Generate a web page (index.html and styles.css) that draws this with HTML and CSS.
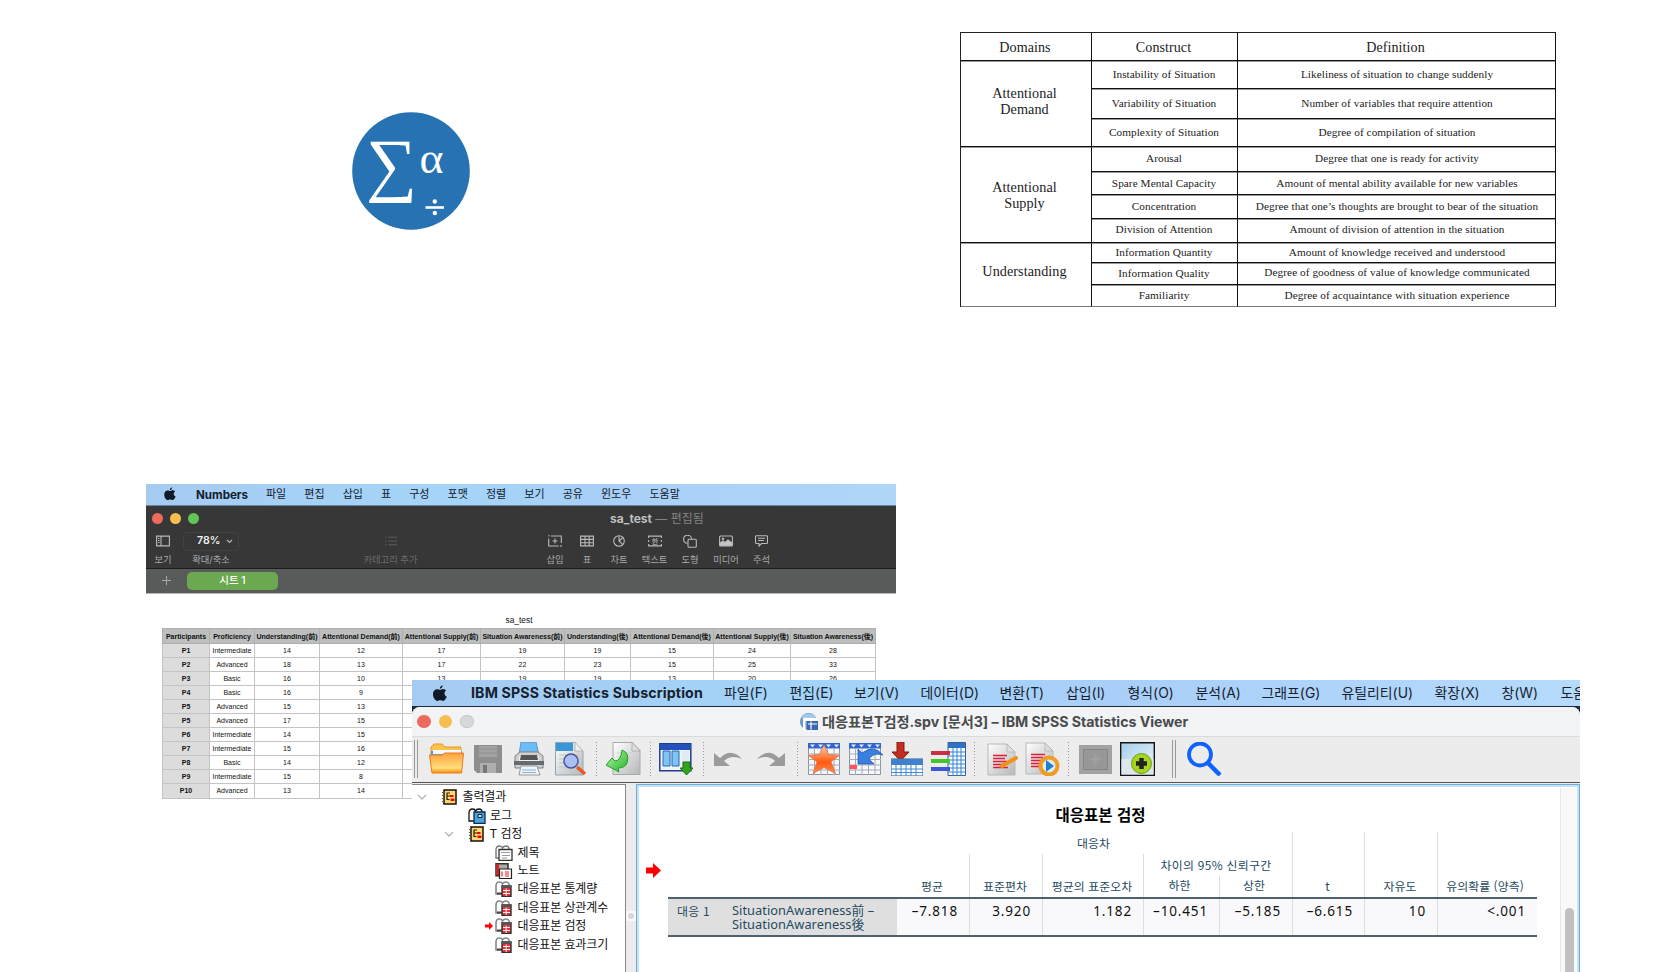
FILE: index.html
```html
<!DOCTYPE html>
<html lang="ko">
<head>
<meta charset="utf-8">
<title>Situation awareness analysis</title>
<link rel="stylesheet" href="styles.css">
</head>
<body>
<svg class="defs" width="0" height="0">
  <defs>
    <linearGradient id="gFold" x1="0" y1="0" x2="0" y2="1"><stop offset="0" stop-color="#ffa040"/><stop offset=".75" stop-color="#ffdf7a"/><stop offset="1" stop-color="#ff8a10"/></linearGradient>
    <linearGradient id="gPage" x1="0" y1="0" x2="1" y2="1"><stop offset="0" stop-color="#fff"/><stop offset="1" stop-color="#b5b7b8"/></linearGradient>
    <linearGradient id="gStar" x1="0" y1="0" x2="0" y2="1"><stop offset="0" stop-color="#ffd2b0"/><stop offset=".6" stop-color="#ff5a10"/><stop offset="1" stop-color="#ff8a50"/></linearGradient>
    <linearGradient id="gGreen" x1="0" y1="0" x2="1" y2="1"><stop offset="0" stop-color="#b6f5a5"/><stop offset="1" stop-color="#22b529"/></linearGradient>
    <linearGradient id="gSky" x1="0" y1="0" x2="1" y2="1"><stop offset="0" stop-color="#a4cdec"/><stop offset="1" stop-color="#f0f7fc"/></linearGradient>
  </defs>
  <symbol id="apple" viewBox="0 0 14 17"><path d="M9.6.2C9.7 2 8.400 3.700 6.800 3.800 6.700 2.200 8.100.5 9.600.2ZM7 4.900c.7 0 1.700-1 3.200-.9 1.300.1 2.300.6 3 1.500-2.500 1.600-2.100 5 .6 6.100-.7 1.900-2 4.300-3.700 4.300-1.100 0-1.600-.7-2.900-.7s-1.800.7-2.900.7C2.400 16-.2 12.400 0 8.700.2 5.900 2 4.200 4 4.200c1.300 0 2.300.7 3 .7Z" fill="#111a24"/></symbol>
  <symbol id="book" viewBox="0 0 16 16"><path d="M2 1h12v14H2z" fill="#fcd873" stroke="#171008" stroke-width="1.500"/><path d="M0 3.500h3M0 6.500h3M0 9.500h3M0 12.500h3" stroke="#554" stroke-width="1"/><path d="M4.500 4h3.500M4.500 7h3M4.500 10.500h3M5 4v7" stroke="#221" stroke-width="1.200"/><path d="M7.500 6h4v2h-4zM8.500 9.500h4v2.500h-4z" fill="#e80909"/></symbol>
  <symbol id="dtable" viewBox="0 0 18 16"><path d="M1 13V5Q1 1 4.500 1 7 1 7.500 3 8.500 1 11 1q3 0 3.500 4v8z" fill="#fff" stroke="#888" stroke-width="1.600"/><path d="M2 12.500h5" stroke="#444" stroke-width="2"/><path d="M7 5h9v10.500H7z" fill="#e8343c" stroke="#333" stroke-width="1.400"/><path d="M6.500 4.500h10v2.500h-10z" fill="#555"/><path d="M8 9.500h7M8 12.500h7M11.200 7.500v7.500" stroke="#fff" stroke-width=".9"/></symbol>
  <symbol id="chev" viewBox="0 0 10 6"><path d="M1 1l4 4 4-4" fill="none" stroke="#b5b5b5" stroke-width="1.300"/></symbol>
  <symbol id="grid" viewBox="0 0 32 32"><path d="M.5.500h31v31H.5z" fill="#f7f8fa" stroke="#8b93a4"/><path d="M0 0h32v5.500H0z" fill="#3464ce"/><path d="M2 1.500h5l-2.500 3zM10 1.500h5l-2.500 3zM18 1.500h5l-2.500 3zM26 1.500h5l-2.500 3z" fill="#dcebff"/><path d="M0 11h32M0 16.500h32M0 22h32M0 27h32M6.500 6v26M13 6v26M19.500 6v26M26 6v26" stroke="#a4aab8"/></symbol>
  <symbol id="script" viewBox="0 0 30 33"><path d="M1 1h19l8 8v23H1z" fill="url(#gPage)" stroke="#b8b8b8"/><path d="M20 1v8h8z" fill="#ddd" stroke="#aaa" stroke-width=".6"/><path d="M6 12.500h14M6 15.500h12M6 18.500h14M6 21.500h10M6 24.500h15" stroke="#df1f3a" stroke-width="1.500"/></symbol>
</svg>

<main class="canvas">

  <svg class="logo" viewBox="0 0 118 118" width="118" height="118">
    <circle cx="59" cy="59" r="58.800" fill="#2672b2"/>
    <text class="logo-text" x="14" y="76" font-size="70.500" textLength="51" lengthAdjust="spacingAndGlyphs">∑</text>
    <text class="logo-text" x="67.500" y="60.500" font-size="45" textLength="24" lengthAdjust="spacingAndGlyphs">α</text>
    <g fill="#fff"><path d="M73.500 94.200h18.500v2.600H73.500z"/><circle cx="82.800" cy="89.500" r="2.200"/><circle cx="82.800" cy="101" r="2.200"/></g>
  </svg>

  <section class="domains">
    <div class="hd">Domains</div><div class="hd">Construct</div><div class="hd">Definition</div>
    <div class="dom r3">Attentional<br>Demand</div>
    <div>Instability of Situation</div><div class="def">Likeliness of situation to change suddenly</div>
    <div>Variability of Situation</div><div class="def">Number of variables that require attention</div>
    <div>Complexity of Situation</div><div class="def">Degree of compilation of situation</div>
    <div class="dom r4">Attentional<br>Supply</div>
    <div class="up">Arousal</div><div class="def up">Degree that one is ready for activity</div>
    <div>Spare Mental Capacity</div><div class="def">Amount of mental ability available for new variables</div>
    <div>Concentration</div><div class="def">Degree that one’s thoughts are brought to bear of the situation</div>
    <div class="up">Division of Attention</div><div class="def up">Amount of division of attention in the situation</div>
    <div class="dom r3 last und">Understanding</div>
    <div>Information Quantity</div><div class="def">Amount of knowledge received and understood</div>
    <div>Information Quality</div><div class="def up">Degree of goodness of value of knowledge communicated</div>
    <div class="last">Familiarity</div><div class="def last">Degree of acquaintance with situation experience</div>
  </section>

  <section class="numbers">
    <nav class="n-menu">
      <svg width="12" height="14"><use href="#apple"/></svg>
      <b>Numbers</b><span>파일</span><span>편집</span><span>삽입</span><span>표</span><span>구성</span><span>포맷</span><span>정렬</span><span>보기</span><span>공유</span><span>윈도우</span><span>도움말</span>
    </nav>
    <div class="n-title">
      <div class="lights small"><i class="red"></i><i class="yellow"></i><i class="green"></i></div>
      <div class="n-name"><b>sa_test</b> <span>— 편집됨</span></div>
    </div>
    <div class="n-tools">
      <div class="tool"><svg width="14" height="12" viewBox="0 0 14 12"><path d="M.6 1.100h12.800v9.800H.6zM5 1v10M2 3.500h1.500M2 5.500h1.500M2 7.500h1.500"/></svg><span>보기</span></div>
      <div class="tool"><div class="zoom">78%<svg width="7" height="5" viewBox="0 0 7 5"><path d="M1 1l2.500 2.500L6 1"/></svg></div><span>확대/축소</span></div>
      <div class="tool dim"><svg width="12" height="10" viewBox="0 0 12 10"><path d="M0 1.200h1.500M3.500 1.200H12M0 5h1.500M3.500 5H12M0 8.800h1.500M3.500 8.800H12"/></svg><span>카테고리 추가</span></div>
      <div class="tool"><svg width="14" height="12" viewBox="0 0 14 12"><path d="M1 0v1.500M3 1h10.300v7M.7 3.500V11h10M13 10v2M7 3.500v5M4.500 6h5"/></svg><span>삽입</span></div>
      <div class="tool"><svg width="14" height="12" viewBox="0 0 14 12"><path d="M.6 1.100h12.800v9.800H.6zM.6 4.400h12.800M.6 7.700h12.800M5 1v10M9.200 1v10"/></svg><span>표</span></div>
      <div class="tool"><svg width="12" height="12" viewBox="0 0 12 12"><circle cx="6" cy="6" r="5.300"/><path d="M6 .7V6l3.800 3.600M6 6l4-3.500"/></svg><span>차트</span></div>
      <div class="tool"><svg width="14" height="12" viewBox="0 0 14 12"><path d="M.6 3V1.100h12.800V3M.6 9v1.900h12.800V9M.6 5v2M13.400 5v2"/><text x="7" y="8.600" font-size="7" text-anchor="middle">한</text></svg><span>텍스트</span></div>
      <div class="tool"><svg width="14" height="13" viewBox="0 0 14 13"><path d="M4.500 8.300A4 4 0 1 1 8.600 4"/><rect x="5" y="4.300" width="8.300" height="8" rx="1"/></svg><span>도형</span></div>
      <div class="tool"><svg width="14" height="12" viewBox="0 0 14 12"><rect x=".6" y="1" width="12.800" height="10" rx="1"/><path d="M1 8l3-2 2 1.500L9 5l4 3v2.500H1z" fill="#c4c5c4"/><circle cx="4" cy="3.700" r=".7"/></svg><span>미디어</span></div>
      <div class="tool"><svg width="13" height="12" viewBox="0 0 13 12"><path d="M1.500.7h10q1 0 1 1v5.800q0 1-1 1H6.500L4 11V8.500H1.500q-1 0-1-1v-6q0-.8 1-.8ZM3 3.200h7M3 5.500h6"/></svg><span>주석</span></div>
    </div>
    <div class="n-tabs"><svg width="9" height="9" viewBox="0 0 9 9"><path d="M4.500 0v9M0 4.500h9" stroke="#a9abaa"/></svg><span>시트 1</span></div>
  </section>

  <section class="sheet">
    <h2>sa_test</h2>
    <table>
      <colgroup><col class="w1"><col class="w2"><col class="w3"><col class="w4"><col class="w5"><col class="w6"><col class="w7"><col class="w8"><col class="w9"><col class="w10"></colgroup>
      <tr><th>Participants</th><th>Proficiency</th><th>Understanding(前)</th><th>Attentional Demand(前)</th><th>Attentional Supply(前)</th><th>Situation Awareness(前)</th><th>Understanding(後)</th><th>Attentional Demand(後)</th><th>Attentional Supply(後)</th><th>Situation Awareness(後)</th></tr>
      <tr><td>P1</td><td>Intermediate</td><td>14</td><td>12</td><td>17</td><td>19</td><td>19</td><td>15</td><td>24</td><td>28</td></tr>
      <tr><td>P2</td><td>Advanced</td><td>18</td><td>13</td><td>17</td><td>22</td><td>23</td><td>15</td><td>25</td><td>33</td></tr>
      <tr><td>P3</td><td>Basic</td><td>16</td><td>10</td><td>13</td><td>19</td><td>19</td><td>13</td><td>20</td><td>26</td></tr>
      <tr><td>P4</td><td>Basic</td><td>16</td><td>9</td><td></td><td></td><td></td><td></td><td></td><td></td></tr>
      <tr><td>P5</td><td>Advanced</td><td>15</td><td>13</td><td></td><td></td><td></td><td></td><td></td><td></td></tr>
      <tr><td>P5</td><td>Advanced</td><td>17</td><td>15</td><td></td><td></td><td></td><td></td><td></td><td></td></tr>
      <tr><td>P6</td><td>Intermediate</td><td>14</td><td>15</td><td></td><td></td><td></td><td></td><td></td><td></td></tr>
      <tr><td>P7</td><td>Intermediate</td><td>15</td><td>16</td><td></td><td></td><td></td><td></td><td></td><td></td></tr>
      <tr><td>P8</td><td>Basic</td><td>14</td><td>12</td><td></td><td></td><td></td><td></td><td></td><td></td></tr>
      <tr><td>P9</td><td>Intermediate</td><td>15</td><td>8</td><td></td><td></td><td></td><td></td><td></td><td></td></tr>
      <tr><td>P10</td><td>Advanced</td><td>13</td><td>14</td><td></td><td></td><td></td><td></td><td></td><td></td></tr>
    </table>
  </section>

  <section class="spss">
    <nav class="s-menu">
      <svg width="14" height="17"><use href="#apple"/></svg>
      <b>IBM SPSS Statistics Subscription</b><span>파일(F)</span><span>편집(E)</span><span>보기(V)</span><span>데이터(D)</span><span>변환(T)</span><span>삽입(I)</span><span>형식(O)</span><span>분석(A)</span><span>그래프(G)</span><span>유틸리티(U)</span><span>확장(X)</span><span>창(W)</span><span>도움</span>
    </nav>
    <div class="s-frame">
    <div class="s-title">
      <div class="lights"><i class="red"></i><i class="yellow"></i><i class="grey"></i></div>
      <div class="s-name">
        <svg width="19" height="18" viewBox="0 0 19 18"><circle cx="8.500" cy="8.500" r="8.500" fill="#6796cc"/><path d="M1 5a8.500 8.500 0 0 1 15 0z" fill="#a4c7ea"/><path d="M3 5h14v3H3zM3 5h2.500v12H3z" fill="#fff"/><path d="M7 8h11v9H7z" fill="#3c69ad"/><path d="M8 11h9M11 8.500v8" stroke="#fff" stroke-width="1.200"/></svg>
        <b>대응표본T검정.spv [문서3] – IBM SPSS Statistics Viewer</b>
      </div>
    </div>
    <div class="s-tools">
      <i class="grip"></i>
      <svg width="35" height="32" viewBox="0 0 35 32"><path d="M2 10V4l3-3h8l3 3h16v8H2z" fill="#ffc34c" stroke="#e9962a"/><path d="M2 8h31v4H2z" fill="#4c9df0"/><path d="M4 7h28v4H4z" fill="#f5fbff"/><path d="M.5 12h13l2-2h19l-2 20H3z" fill="url(#gFold)" stroke="#ec7a12"/></svg>
      <svg width="28" height="28" viewBox="0 0 28 28"><path d="M0 0h28v28H3l-3-3z" fill="#8e8e8e"/><path d="M5 1h18v11H5z" fill="#a3a3a3"/><path d="M5 4h18M5 8h18" stroke="#8e8e8e"/><path d="M6 18h16v10H6z" fill="#aeaeae"/><path d="M9 20h4v8H9z" fill="#777"/></svg>
      <svg width="30" height="34" viewBox="0 0 30 34"><path d="M7 0h15l3 13H5z" fill="#6dbcf5" stroke="#5697c9"/><path d="M1 14l5-4h18l5 4v12H1z" fill="#cfd0d1" stroke="#818181"/><path d="M5 14h20v7H5z" fill="#eee"/><path d="M0 19h30v4H0z" fill="#666b70"/><path d="M7 13h16l1 5H6z" fill="#555"/><path d="M7 24h16l3 9H5z" fill="#edf6ff" stroke="#999"/><path d="M8 28h14M8 30.500h14" stroke="#98afc4"/></svg>
      <svg width="31" height="34" viewBox="0 0 31 34"><path d="M.5.500h19L28 9v24H.5z" fill="url(#gPage)" stroke="#8fa5b5"/><path d="M1 1h17v8H1z" fill="#3a97d7"/><path d="M4 13h20M4 17h20M4 21h20M4 25h20" stroke="#c1c5ca"/><path d="M20 0v9h8z" fill="#eee" stroke="#999" stroke-width=".6"/><path d="M22 25l8 7" stroke="#e85a22" stroke-width="3.500"/><circle cx="16" cy="19" r="7" fill="#a9bff5" stroke="#46569d" stroke-width="1.500"/></svg>
      <i class="sep"></i>
      <svg width="35" height="34" viewBox="0 0 35 34"><path d="M7 .5h19l8 8v24H7z" fill="url(#gPage)" stroke="#aaa"/><path d="M26 0v9h8z" fill="#ddd" stroke="#999" stroke-width=".6"/><path d="M11 11h18M11 15h18M11 19h18M11 23h18" stroke="#d0d0d0"/><path d="M16 8q8 3 5 13-2 5-9 5l1 4L0 23l6-7 3 3q6 0 7-11z" fill="url(#gGreen)" stroke="#249e28"/></svg>
      <i class="sep"></i>
      <svg width="34" height="32" viewBox="0 0 34 32"><path d="M.8.800h31v27H.8z" fill="#f0f5fd" stroke="#203d8e" stroke-width="1.500"/><path d="M1 1h31v6H1z" fill="#2451ba"/><path d="M4 8h7v15H4zM13 8h7v15h-7z" fill="#7fc4f3" stroke="#2866ae"/><path d="M23 8h7v15h-7z" fill="#e1eaf5"/><path d="M24 19h7v6h3l-6.500 7-6.500-7h3z" fill="#31a31d" stroke="#177009"/></svg>
      <i class="sep"></i>
      <svg width="29" height="17" viewBox="0 0 29 17"><path d="M0 2l6 5Q17-4 28 8 17 3 10 10l6 5H0z" fill="#9b9b9b"/></svg>
      <svg width="29" height="17" viewBox="0 0 29 17"><path d="M29 2l-6 5Q12-4 1 8 12 3 19 10l-6 5h16z" fill="#9b9b9b"/></svg>
      <i class="sep"></i>
      <svg width="32" height="32" viewBox="0 0 32 32"><use href="#grid"/><path d="M16 2l4.500 9.500 11 .8-8.500 6.500 4.500 11.700L16 24.500 5 30.500 9 19 .5 12.500l11-1z" fill="url(#gStar)" stroke="#e0764a" stroke-width=".8"/></svg>
      <svg width="34" height="32" viewBox="0 0 34 32"><use href="#grid" width="32" height="32"/><path d="M1 22h7v4H1z" fill="#ff5260"/><path d="M9 6l4 4q12-9 21 2-9-3-14 4l5 5H9z" fill="#397fe0" stroke="#234fa9" stroke-width=".7"/></svg>
      <svg width="32" height="34" viewBox="0 0 32 34"><path d="M6 0h7v10h5L9.500 19 1 10h5z" fill="#c32d20" stroke="#851a12"/><path d="M0 17h32v17H0z" fill="#f8fbff" stroke="#315989"/><path d="M0 17h32v6H0z" fill="#4180ca"/><path d="M0 27h32M0 30.500h32M5 23v11M10 23v11M15 23v11M20 23v11M25 23v11" stroke="#438ad0"/></svg>
      <svg width="35" height="34" viewBox="0 0 35 34"><path d="M17 .5h17.500v33H17z" fill="#f6fbff" stroke="#376094"/><path d="M17 1h17v5H17z" fill="#2f71c6"/><path d="M17 10h17M17 14h17M17 18h17M17 22h17M17 26h17M17 30h17M22 6v28M26 6v28M30 6v28" stroke="#3b84d1"/><path d="M0 9h19v4H0z" fill="#c83044"/><path d="M0 17h19v4H0z" fill="#45c529"/><path d="M0 25h19v4H0z" fill="#3d55d6"/></svg>
      <i class="sep"></i>
      <svg width="31" height="33" viewBox="0 0 31 33"><use href="#script" width="30" height="33"/><path d="M15 23L29 15" stroke="#f39019" stroke-width="4" stroke-linecap="round"/></svg>
      <svg width="35" height="34" viewBox="0 0 35 34"><use href="#script" width="30" height="33"/><circle cx="24" cy="24" r="8.500" fill="#d9edff" stroke="#f29a22" stroke-width="4"/><path d="M21 18l8 6-8 6z" fill="#2280c8"/></svg>
      <i class="sep"></i>
      <svg width="33" height="29" viewBox="0 0 33 29"><path d="M0 0h33v29H0z" fill="#a2a2a2"/><path d="M4.500 4.500h24v20h-24z" fill="#979797" stroke="#858585"/><path d="M16.500 8l2 5 5 1.500-5 1.500-2 5-2-5-5-1.500 5-1.500z" fill="#a0a0a0"/></svg>
      <svg width="35" height="34" viewBox="0 0 35 34"><path d="M.7.700h33.600v32.600H.7z" fill="url(#gSky)" stroke="#151515" stroke-width="1.400"/><path d="M1.500 17h32v15.500h-32z" fill="#dde6ec"/><circle cx="21.500" cy="21.500" r="10" fill="#a5d51c" stroke="#6f9d16"/><path d="M21.500 16v11M16 21.500h11" stroke="#222" stroke-width="4.500"/></svg>
      <i class="grip tall"></i>
      <svg width="35" height="34" viewBox="0 0 35 34"><circle cx="13" cy="12.500" r="11" fill="none" stroke="#0f62fe" stroke-width="3.800"/><path d="M21 21l12 12" stroke="#0f62fe" stroke-width="4.500"/></svg>
    </div>
    <div class="s-body">
      <aside class="tree">
        <div class="node l0"><svg class="chev" width="10" height="6"><use href="#chev"/></svg><svg width="16" height="16"><use href="#book"/></svg><span>출력결과</span></div>
        <div class="node l1"><svg width="18" height="16" viewBox="0 0 18 16"><path d="M1 13V5Q1 1 4.500 1 7 1 7.500 3 8.500 1 11 1q3 0 3 3v9z" fill="#fff" stroke="#111" stroke-width="1.300"/><path d="M6 4h11v11.300H6z" fill="#4aa3dc" stroke="#0d2d4c" stroke-width="1.300"/><path d="M10 6.500h4v3h-4z" fill="#bfe6ff" stroke="#123"/></svg><span>로그</span></div>
        <div class="node l2"><svg class="chev" width="10" height="6"><use href="#chev"/></svg><svg width="16" height="16"><use href="#book"/></svg><span>T 검정</span></div>
        <div class="node l3"><svg width="18" height="16" viewBox="0 0 18 16"><path d="M1 13V5Q1 1 4.500 1 7 1 7.500 3 8.500 1 11 1q3 0 3 3v9z" fill="#fff" stroke="#777" stroke-width="1.400"/><path d="M4 4.500h13v11H4z" fill="#fff" stroke="#333" stroke-width="1.300"/><path d="M6 7.500h9M7 10.500h8M7 13h5" stroke="#999"/></svg><span>제목</span></div>
        <div class="node l3"><svg width="18" height="16" viewBox="0 0 18 16"><path d="M1 .8h12v12H1z" fill="#aaa" stroke="#332" stroke-width="1.500"/><path d="M1.500 1h2.500v11H1.500z" fill="#d22"/><path d="M4.500 6h12v9.500h-12z" fill="#fff" stroke="#222" stroke-width="1.200"/><path d="M7 8.500v5M10 9h4M10 11h4M10 13h4" stroke="#e22" stroke-width="1.200"/></svg><span>노트</span></div>
        <div class="node l3"><svg width="18" height="16"><use href="#dtable"/></svg><span>대응표본 통계량</span></div>
        <div class="node l3"><svg width="18" height="16"><use href="#dtable"/></svg><span>대응표본 상관계수</span></div>
        <div class="node l4"><svg class="mark" width="8" height="8" viewBox="0 0 8 8"><path d="M0 2.500h4V0l4 4-4 4V5.500H0z" fill="#f00"/></svg><svg width="18" height="16"><use href="#dtable"/></svg><span>대응표본 검정</span></div>
        <div class="node l3"><svg width="18" height="16"><use href="#dtable"/></svg><span>대응표본 효과크기</span></div>
      </aside>
      <div class="splitter"><i></i></div>
      <div class="viewer">
        <svg class="pointer" width="15" height="15" viewBox="0 0 15 15"><path d="M0 4.500h7V0l8 7.500L7 15v-4.500H0z" fill="#f00"/></svg>
        <div class="result">
          <h3>대응표본 검정</h3>
          <div class="ttest">
            <div class="c-diff">대응차</div>
            <div class="c-mean">평균</div>
            <div class="c-sd ln">표준편차</div>
            <div class="c-se ln">평균의 표준오차</div>
            <div class="c-ci ln">차이의 95% 신뢰구간</div>
            <div class="c-lo ln">하한</div>
            <div class="c-hi ln">상한</div>
            <div class="c-t ln">t</div>
            <div class="c-df ln">자유도</div>
            <div class="c-sig ln">유의확률 (양측)</div>
            <div class="rule"></div>
            <div class="row-a">대응 1</div><div class="row-b">SituationAwareness前 –<br>SituationAwareness後</div>
            <div class="v">–7.818</div><div class="v ln">3.920</div><div class="v ln">1.182</div><div class="v ln">–10.451</div><div class="v ln">–5.185</div><div class="v ln">–6.615</div><div class="v ln">10</div><div class="v ln">&lt;.001</div>
            <div class="rule"></div>
          </div>
        </div>
        <div class="scroll"><i></i></div>
      </div>
    </div>
    </div>
  </section>
</main>
</body>
</html>
```
FILE: styles.css
```css
* { box-sizing: border-box; }
body { margin: 0; background: #fff; font-family: Inter, "Noto Sans CJK KR", sans-serif; color: #111; }
b { font-weight: 600; }
svg { display: block; flex: none; }
.defs { position: absolute; }
.canvas { position: relative; width: 1680px; height: 972px; overflow: hidden; }

/* logo */
.logo { position: absolute; left: 352px; top: 112px; }
.logo-text { font-family: "Liberation Serif", serif; fill: #fff; }

/* domain table */
.domains {
  position: absolute; left: 960px; top: 32px; width: 596px; display: grid;
  grid-template-columns: 131px 146px 318px;
  grid-template-rows: 28px 28px 30px 28px 25px 23px 24px 24px 20px 22px 22px;
  border-top: 1px solid #222; border-left: 1px solid #222;
  font: 11.25px/15px "Liberation Serif", serif; letter-spacing: .06px; color: #1c1c1c; text-align: center;
}
.domains > div { display: flex; align-items: center; justify-content: center; padding-right: 1px; border-right: 1px solid #111; border-bottom: 1px solid #111; white-space: nowrap; box-shadow: 0 1px 0 #999; }
.domains > .def { padding-left: 2px; }
.domains .hd { font-size: 14.1px; padding: 2px 2px 0 0; }
.domains .dom { font-size: 14.2px; line-height: 16px; padding: 0 3px 6px 0; }
.domains .r3 { grid-row: span 3; }
.domains .r4 { grid-row: span 4; padding-bottom: 0; }
.domains .und { padding-bottom: 8px; }
.domains .last { border-bottom-color: #777; box-shadow: none; }
.domains .up { padding-bottom: 2px; }

/* traffic lights */
.lights { display: flex; gap: 8px; }
.lights i { width: 13.5px; height: 13.5px; border-radius: 50%; }
.lights.small { gap: 7px; }
.lights.small i { width: 11px; height: 11px; }
.red { background: #ed6a5e; }
.yellow { background: #f5bf4f; }
.green { background: #61c554; }
.grey { background: #d7d8da; box-shadow: inset 0 0 0 1px #c7c8ca; }

/* Numbers window */
.numbers { position: absolute; left: 146px; top: 484px; width: 750px; height: 110px; background: #363736; }
.n-menu { display: flex; align-items: center; height: 22px; padding-left: 18px; background: linear-gradient(90deg, #a6cbf2, #a5d5f8 40%, #a8cff7 60%, #b0d6f9); border-bottom: 1px solid #6585a0; font-size: 11px; line-height: 20px; color: #12202e; }
.n-menu svg { margin-bottom: 2px; }
.n-menu b { font-size: 11.6px; margin: 0 18px 0 20px; width: 52px; font-weight: 700; white-space: nowrap; }
.n-menu span { margin-right: 18.1px; padding-bottom: 1px; }
.n-title { display: grid; grid-template-columns: 458px auto; align-items: center; height: 25px; padding-left: 6px; font-size: 12px; line-height: 17px; white-space: nowrap; }
.n-name { padding-bottom: 1px; color: #828383; }
.n-name b { color: #bfc0c0; font-weight: 700; }
.n-tools { display: grid; grid-template-columns: 34px 62px 297px 32px 32px 32px 39px 32px 40px 31px; height: 38px; border-bottom: 1px solid #1c1c1c; }
.tool { display: grid; grid-template-rows: 20px 17px; justify-items: center; align-items: center; font-size: 9.3px; line-height: 14px; color: #a9aaaa; white-space: nowrap; }
.tool svg { fill: none; stroke: #b9baba; stroke-width: 1.1; }
.tool svg text { fill: #c9caca; stroke: none; }
.tool.dim { color: #6b6c6b; }
.tool.dim svg { stroke: #5c5d5c; }
.zoom { display: flex; align-items: center; gap: 6px; width: 56px; height: 19px; padding-left: 13px; border: 1px solid #414241; border-radius: 4px; color: #f0f0f0; font-size: 10.6px; font-weight: 600; }
.n-tabs { display: flex; align-items: center; height: 25px; padding: 0 0 1px 16px; background: #595b5a; border-bottom: 1px solid #b5b5b5; }
.n-tabs span { width: 91px; height: 18px; margin-left: 16px; border-radius: 5px; background: #6ca84f; color: #fff; font-size: 10.5px; font-weight: 500; line-height: 18px; text-align: center; }

/* data sheet */
.sheet { position: absolute; left: 162px; top: 613px; width: 714px; font-family: "Liberation Sans", "Noto Sans CJK JP", sans-serif; }
.sheet h2 { margin: 0; height: 15px; font-size: 8.4px; font-weight: 400; line-height: 14px; text-align: center; }
.sheet table { width: 713px; table-layout: fixed; border-collapse: collapse; font-size: 7px; line-height: 9px; text-align: center; }
.sheet th, .sheet td { padding: 0; border: 1px solid #c4c4c4; white-space: nowrap; }
.sheet tr { height: 14.06px; }
.sheet tr:first-child { height: 15px; }
.sheet th { background: #bdbfbe; border-color: #aeb0af; font-weight: 700; }
.sheet td:first-child { background: #dcdcdc; font-weight: 700; }
.w1 { width: 47px; } .w2 { width: 45px; } .w3 { width: 65px; } .w4 { width: 83px; } .w5 { width: 78px; }
.w6 { width: 84px; } .w7 { width: 66px; } .w8 { width: 83px; } .w9 { width: 77px; } .w10 { width: 85px; }

/* SPSS window */
.spss { position: absolute; left: 412px; top: 680px; width: 1168px; height: 292px; overflow: hidden; background: #1d2c3b; }
.s-menu { display: grid; grid-template-columns: 38px 253px 65.500px 64.500px 66.500px 79px 66.500px 61.500px 68px 66px 80px 93px 67px 59px 20px; align-items: center; height: 26px; padding-left: 21px; background: linear-gradient(90deg, #a6cbf2, #a3d4f8 35%, #a9cff8 60%, #b6dafc); font-size: 13.9px; line-height: 24px; color: #16222e; white-space: nowrap; }
.s-menu b { font-size: 14.2px; font-weight: 700; letter-spacing: .14px; }
.s-frame { margin-top: 1px; height: 265px; border-radius: 8px 8px 0 0; overflow: hidden; background: #ececec; }
.s-title { display: grid; grid-template-columns: 383px auto; align-items: center; height: 30px; padding-left: 5px; background: #f1f3f5; border-bottom: 1px solid #d9dbdd; }
.s-name { display: flex; align-items: center; gap: 3px; font-size: 14.2px; line-height: 24px; letter-spacing: -.05px; color: #4a4b4c; white-space: nowrap; }
.s-name b { font-weight: 700; }
.s-tools { display: grid; grid-template-columns: 15px 45px 40px 41px 41px 10px 44px 9px 44px 11px 42px 41px 11px 41px 42px 40px 43px 13px 38px 43px 11px 41px 52px 15px 35px; align-items: center; height: 46px; padding: 0 0 1px 2px; border-bottom: 1px solid #555; }
.grip { width: 4px; height: 38px; border: solid #999; border-width: 0 1px; }
.sep { width: 1px; height: 34px; background: repeating-linear-gradient(#999 0 1px, transparent 1px 3px); }
.s-body { display: grid; grid-template-columns: 214px 10px 944px; height: 189px; padding-top: 1px; }
.tree { background: #fff; border: solid #888; border-width: 1px 1px 0 0; padding-top: 3px; font-size: 12px; letter-spacing: -.12px; color: #111; }
.node { display: flex; align-items: center; height: 18.45px; line-height: 18px; white-space: nowrap; }
.node span { margin-left: 4.500px; }
.l0 { padding-left: 5px; } .l0 .chev { margin-right: 15px; }
.l1 { padding-left: 55.500px; }
.l2 { padding-left: 32px; } .l2 .chev { margin-right: 15px; }
.l3 { padding-left: 83px; }
.l4 { padding-left: 73px; } .mark { margin-right: 2px; }
.splitter { padding-top: 127px; }
.splitter i { display: block; height: 10px; background: #f8f8f8; }
.splitter i::after { content: ""; display: block; width: 6px; height: 6px; margin: 0 2px; border-radius: 50%; background: #d7d7d7; position: relative; top: 2px; }
.viewer { display: grid; grid-template-columns: 29px 1fr 18px; background: #fff; border: solid #6cb0e3; border-width: 1px 1px 0 1px; box-shadow: inset 0 2px 0 #c6e3f3, inset 2px 0 0 #c6e3f3, inset -2px 0 0 #c6e3f3; }
.pointer { margin: 78px 0 0 9px; }
.result { padding: 17px 0 0 2px; font-family: "Noto Sans", "Noto Sans CJK KR", sans-serif; }
.result h3 { width: 865px; height: 30px; margin: 0; font: 700 15.5px/24px "Noto Sans CJK KR", sans-serif; color: #000; text-align: center; }
.ttest { display: grid; grid-template-columns: 54px 175px 72px 73px 101px 76px 73px 72px 73px 100px; grid-template-rows: 22px 22px 21px 2px 36px 2px; width: 869px; font: 11.9px/18px "Noto Sans CJK KR", sans-serif; letter-spacing: .05px; color: #264a60; text-align: center; white-space: nowrap; }
.ttest > div { display: flex; align-items: flex-end; justify-content: center; padding: 0 2px 2px 0; }
.ln { border-left: 1px solid #dedede; }
.ttest .c-diff { grid-area: 1 / 3 / 2 / 8; align-items: center; padding-bottom: 0; }
.c-mean { grid-area: 2 / 3 / 4 / 4; }
.c-sd { grid-area: 2 / 4 / 4 / 5; }
.c-se { grid-area: 2 / 5 / 4 / 6; }
.ttest .c-ci { grid-area: 2 / 6 / 3 / 8; align-items: center; padding: 0 4px 0 0; letter-spacing: .3px; }
.ttest .c-lo { grid-area: 3 / 6; padding: 0 4px 3px 0; }
.ttest .c-hi { grid-area: 3 / 7; padding: 0 4px 3px 0; }
.c-t { grid-area: 1 / 8 / 4 / 9; }
.c-df { grid-area: 1 / 9 / 4 / 10; }
.ttest .c-sig { grid-area: 1 / 10 / 4 / 11; padding-right: 5px; }
.ttest .rule { grid-column: 1 / -1; padding: 0; background: #4d626e; }
.ttest .row-a, .ttest .row-b { align-items: flex-start; justify-content: flex-start; background: #dfdfdf; }
.ttest .row-a { padding: 3px 0 0 9px; letter-spacing: .3px; }
.ttest .row-b { padding: 4px 0 0 10px; font: 12.8px/14px "Noto Sans", "Noto Sans CJK KR", sans-serif; text-align: left; }
.ttest .v { align-items: flex-start; justify-content: flex-end; padding: 3px 11px 0 0; background: #f9f9fb; color: #111; font: 13.5px/18px "Noto Sans", sans-serif; letter-spacing: .85px; }
.scroll { margin: 3px 3px 0 -1px; padding-top: 120px; background: #f9f9f9; border-left: 1px solid #e8e8e8; }
.scroll i { display: block; width: 9px; height: 80px; margin-left: 4px; border-radius: 5px 5px 0 0; background: #c1c1c1; }
```
